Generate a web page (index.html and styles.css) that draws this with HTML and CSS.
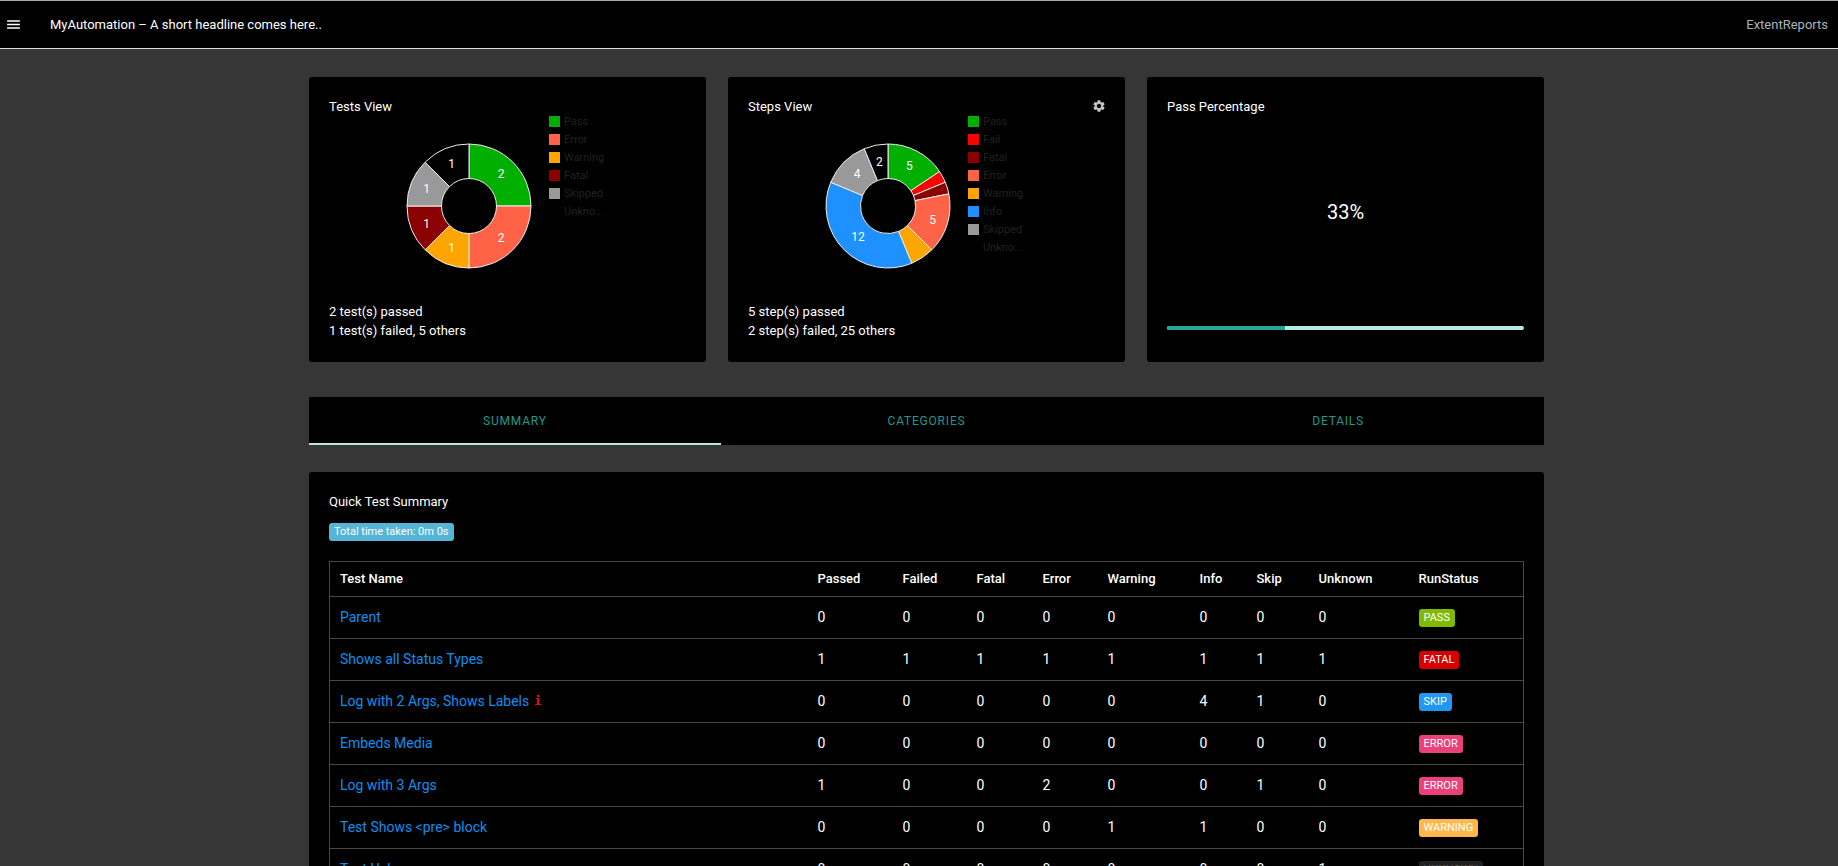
FILE: index.html
```html
<!DOCTYPE html>
<html>
<head>
    <meta charset="UTF-8">
    <title>MyAutomation</title>
    <link rel="stylesheet" href="styles.css">
</head>
<body>
    <nav class="topbar">
        <svg class="menu-icon" viewBox="0 0 24 24"><path d="M3 18h18v-2H3v2zm0-5h18v-2H3v2zm0-7v2h18V6H3z"/></svg>
        <span class="headline">MyAutomation – A short headline comes here..</span>
        <span class="brand">ExtentReports</span>
    </nav>

    <main class="container">
        <section class="charts">
            <div class="card">
                <div class="card-head"><span>Tests View</span></div>
                <div class="chart">
                    <svg class="donut" viewBox="-63 -63 126 126">
                        <path class="seg pass" d="M0 -62A62 62 0 0 1 62 0L27.5 0A27.5 27.5 0 0 0 0 -27.5Z"/>
                        <path class="seg error" d="M62 0A62 62 0 0 1 0 62L0 27.5A27.5 27.5 0 0 0 27.5 0Z"/>
                        <path class="seg warning" d="M0 62A62 62 0 0 1 -43.84 43.84L-19.45 19.45A27.5 27.5 0 0 0 0 27.5Z"/>
                        <path class="seg fatal" d="M-43.84 43.84A62 62 0 0 1 -62 0L-27.5 0A27.5 27.5 0 0 0 -19.45 19.45Z"/>
                        <path class="seg skipped" d="M-62 0A62 62 0 0 1 -43.84 -43.84L-19.45 -19.45A27.5 27.5 0 0 0 -27.5 0Z"/>
                        <path class="seg unknown" d="M-43.84 -43.84A62 62 0 0 1 0 -62L0 -27.5A27.5 27.5 0 0 0 -19.45 -19.45Z"/>
                        <text x="32" y="-32">2</text>
                        <text x="32" y="32">2</text>
                        <text x="-17.5" y="42">1</text>
                        <text x="-42.5" y="17.5">1</text>
                        <text x="-42.5" y="-17.5">1</text>
                        <text x="-17.5" y="-42">1</text>
                    </svg>
                    <ul class="legend">
                        <li><i class="box pass"></i>Pass</li>
                        <li><i class="box error"></i>Error</li>
                        <li><i class="box warning"></i>Warning</li>
                        <li><i class="box fatal"></i>Fatal</li>
                        <li><i class="box skipped"></i>Skipped</li>
                        <li><i class="box"></i>Unkno...</li>
                    </ul>
                </div>
                <div class="card-foot">
                    <div>2 test(s) passed</div>
                    <div>1 test(s) failed, 5 others</div>
                </div>
            </div>

            <div class="card">
                <div class="card-head">
                    <span>Steps View</span>
                    <svg class="gear" viewBox="2 2 20 20"><path d="M19.14,12.94c0.04-0.3,0.06-0.61,0.06-0.94c0-0.32-0.02-0.64-0.07-0.94l2.03-1.58c0.18-0.14,0.23-0.41,0.12-0.61l-1.92-3.32c-0.12-0.22-0.37-0.29-0.59-0.22l-2.39,0.96c-0.5-0.38-1.03-0.7-1.62-0.94L14.4,2.81c-0.04-0.24-0.24-0.41-0.48-0.41h-3.84c-0.24,0-0.43,0.17-0.47,0.41L9.25,5.35C8.66,5.59,8.12,5.92,7.63,6.29L5.24,5.33c-0.22-0.08-0.47,0-0.59,0.22L2.74,8.87C2.62,9.08,2.66,9.34,2.86,9.48l2.03,1.58C4.84,11.36,4.8,11.69,4.8,12s0.02,0.64,0.07,0.94l-2.03,1.58c-0.18,0.14-0.23,0.41-0.12,0.61l1.92,3.32c0.12,0.22,0.37,0.29,0.59,0.22l2.39-0.96c0.5,0.38,1.03,0.7,1.62,0.94l0.36,2.54c0.05,0.24,0.24,0.41,0.48,0.41h3.84c0.24,0,0.44-0.17,0.47-0.41l0.36-2.54c0.59-0.24,1.13-0.56,1.62-0.94l2.39,0.96c0.22,0.08,0.47,0,0.59-0.22l1.92-3.32c0.12-0.22,0.07-0.47-0.12-0.61L19.14,12.94z M12,15.6c-1.98,0-3.6-1.62-3.6-3.6s1.62-3.6,3.6-3.6s3.6,1.62,3.6,3.6S13.98,15.6,12,15.6z"/></svg>
                </div>
                <div class="chart">
                    <svg class="donut" viewBox="-63 -63 126 126">
                        <path class="seg pass" d="M0 -62A62 62 0 0 1 51.55 -34.45L22.87 -15.28A27.5 27.5 0 0 0 0 -27.5Z"/>
                        <path class="seg fail" d="M51.55 -34.45A62 62 0 0 1 57.28 -23.73L25.41 -10.52A27.5 27.5 0 0 0 22.87 -15.28Z"/>
                        <path class="seg fatal" d="M57.28 -23.73A62 62 0 0 1 60.81 -12.1L26.97 -5.37A27.5 27.5 0 0 0 25.41 -10.52Z"/>
                        <path class="seg error" d="M60.81 -12.1A62 62 0 0 1 43.84 43.84L19.45 19.45A27.5 27.5 0 0 0 26.97 -5.37Z"/>
                        <path class="seg warning" d="M43.84 43.84A62 62 0 0 1 23.73 57.28L10.52 25.41A27.5 27.5 0 0 0 19.45 19.45Z"/>
                        <path class="seg info" d="M23.73 57.28A62 62 0 0 1 -57.28 -23.73L-25.41 -10.52A27.5 27.5 0 0 0 10.52 25.41Z"/>
                        <path class="seg skipped" d="M-57.28 -23.73A62 62 0 0 1 -23.73 -57.28L-10.52 -25.41A27.5 27.5 0 0 0 -25.41 -10.52Z"/>
                        <path class="seg unknown" d="M-23.73 -57.28A62 62 0 0 1 0 -62L0 -27.5A27.5 27.5 0 0 0 -10.52 -25.41Z"/>
                        <text x="21.3" y="-39.7">5</text>
                        <text x="44.7" y="13.7">5</text>
                        <text x="-30" y="31">12</text>
                        <text x="-31" y="-31.6">4</text>
                        <text x="-8.7" y="-43.9">2</text>
                    </svg>
                    <ul class="legend">
                        <li><i class="box pass"></i>Pass</li>
                        <li><i class="box fail"></i>Fail</li>
                        <li><i class="box fatal"></i>Fatal</li>
                        <li><i class="box error"></i>Error</li>
                        <li><i class="box warning"></i>Warning</li>
                        <li><i class="box info"></i>Info</li>
                        <li><i class="box skipped"></i>Skipped</li>
                        <li><i class="box"></i>Unkno...</li>
                    </ul>
                </div>
                <div class="card-foot">
                    <div>5 step(s) passed</div>
                    <div>2 step(s) failed, 25 others</div>
                </div>
            </div>

            <div class="card">
                <div class="card-head"><span>Pass Percentage</span></div>
                <div class="percent">33%</div>
                <div class="progress"><div class="progress-fill"></div></div>
            </div>
        </section>

        <ul class="tabs">
            <li class="tab active">Summary</li>
            <li class="tab">Categories</li>
            <li class="tab">Details</li>
        </ul>

        <section class="card summary">
            <div class="summary-title">Quick Test Summary</div>
            <span class="time-badge">Total time taken: 0m 0s</span>
            <table class="results">
                <colgroup>
                    <col class="c-name"><col class="c-passed"><col class="c-failed"><col class="c-fatal"><col class="c-error">
                    <col class="c-warning"><col class="c-info"><col class="c-skip"><col class="c-unknown"><col>
                </colgroup>
                <thead>
                    <tr><th>Test Name</th><th>Passed</th><th>Failed</th><th>Fatal</th><th>Error</th><th>Warning</th><th>Info</th><th>Skip</th><th>Unknown</th><th>RunStatus</th></tr>
                </thead>
                <tbody>
                    <tr><td><a href="#">Parent</a></td><td>0</td><td>0</td><td>0</td><td>0</td><td>0</td><td>0</td><td>0</td><td>0</td><td><span class="status st-pass">PASS</span></td></tr>
                    <tr><td><a href="#">Shows all Status Types</a></td><td>1</td><td>1</td><td>1</td><td>1</td><td>1</td><td>1</td><td>1</td><td>1</td><td><span class="status st-fatal">FATAL</span></td></tr>
                    <tr><td><a href="#">Log with 2 Args, Shows Labels</a> <svg class="flag" viewBox="0 0 6 10"><path d="M2 0h2v2H2zM1 3h3v6h2v1H0V9h2V4H1z"/></svg></td><td>0</td><td>0</td><td>0</td><td>0</td><td>0</td><td>4</td><td>1</td><td>0</td><td><span class="status st-skip">SKIP</span></td></tr>
                    <tr><td><a href="#">Embeds Media</a></td><td>0</td><td>0</td><td>0</td><td>0</td><td>0</td><td>0</td><td>0</td><td>0</td><td><span class="status st-error">ERROR</span></td></tr>
                    <tr><td><a href="#">Log with 3 Args</a></td><td>1</td><td>0</td><td>0</td><td>2</td><td>0</td><td>0</td><td>1</td><td>0</td><td><span class="status st-error">ERROR</span></td></tr>
                    <tr><td><a href="#">Test Shows &lt;pre&gt; block</a></td><td>0</td><td>0</td><td>0</td><td>0</td><td>1</td><td>1</td><td>0</td><td>0</td><td><span class="status st-warning">WARNING</span></td></tr>
                    <tr><td><a href="#">Test Unknown</a></td><td>0</td><td>0</td><td>0</td><td>0</td><td>0</td><td>0</td><td>0</td><td>1</td><td><span class="status st-unknown">UNKNOWN</span></td></tr>
                </tbody>
            </table>
        </section>
    </main>
</body>
</html>
```

FILE: styles.css
```css
html, body {
    height: 100%;
    overflow: hidden;
}

body {
    margin: 0;
    background-color: #363636;
    color: #fff;
    font-family: Roboto, 'Liberation Sans', sans-serif;
    font-size: 13px;
}

ul {
    list-style: none;
    margin: 0;
    padding: 0;
}

a {
    color: #0f8fee;
    text-decoration: none;
}

/* top bar */
.topbar {
    display: flex;
    align-items: center;
    box-sizing: border-box;
    height: 49px;
    padding: 0 10px 0 4px;
    background-color: #000;
    border-top: 1px solid #aaa;
    border-bottom: 1px solid #ddd;
}

.menu-icon {
    width: 17px;
    height: 17px;
    margin-left: 1px;
    fill: #fff;
}

.headline {
    margin-left: 28px;
}

.brand {
    margin-left: auto;
    color: #a8b4bd;
}

/* page column */
.container {
    width: 1235px;
    margin: 28px 0 0 309px;
}

.charts {
    display: grid;
    grid-template-columns: repeat(3, 397px);
    column-gap: 22px;
}

.card {
    box-sizing: border-box;
    padding: 23px 20px 22px;
    background-color: #000;
    border-radius: 3px;
}

.card-head {
    display: flex;
    justify-content: space-between;
    align-items: center;
    height: 12px;
}

.gear {
    width: 12px;
    height: 12px;
    fill: #c4c4c4;
}

/* donut cards */
.chart {
    display: flex;
    align-items: flex-start;
    height: 190px;
}

.donut {
    flex: none;
    width: 126px;
    height: 126px;
    margin: 31px 0 0 77px;
}

.donut text {
    fill: #fff;
    font-size: 12px;
    text-anchor: middle;
    dominant-baseline: central;
}

.seg {
    stroke: #eee;
    stroke-width: 1;
}

.pass { fill: #00af00; background-color: #00af00; }
.fail { fill: #f00; background-color: #f00; }
.fatal { fill: #8b0000; background-color: #8b0000; }
.error { fill: #ff6347; background-color: #ff6347; }
.warning { fill: #ffa500; background-color: #ffa500; }
.info { fill: #1e90ff; background-color: #1e90ff; }
.skipped { fill: #999; background-color: #999; }
.unknown { fill: #000; }

.legend {
    margin-left: 17px;
    color: #222;
    font-size: 11px;
}

.legend li {
    display: flex;
    align-items: center;
    height: 18px;
}

.box {
    width: 11px;
    height: 11px;
    margin-right: 4px;
}

.card-foot {
    line-height: 19px;
}

/* pass percentage card */
.percent {
    box-sizing: border-box;
    height: 190px;
    padding-top: 88px;
    text-align: center;
    font-size: 20px;
}

.progress {
    height: 4px;
    margin-top: 24px;
    margin-bottom: 10px;
    background-color: #b2ebe5;
    border-radius: 2px;
    overflow: hidden;
}

.progress-fill {
    width: 33%;
    height: 100%;
    background-color: #26a69a;
}

/* tabs */
.tabs {
    display: grid;
    grid-template-columns: repeat(3, 1fr);
    margin-top: 35px;
    background-color: #000;
}

.tab {
    box-sizing: border-box;
    height: 48px;
    line-height: 48px;
    text-align: center;
    text-transform: uppercase;
    font-size: 12px;
    letter-spacing: .8px;
    color: #22988c;
    border-bottom: 2px solid #000;
}

.tab.active {
    border-bottom-color: #b9e6e2;
}

/* summary table */
.summary {
    margin-top: 27px;
    padding-top: 20px;
}

.summary-title {
    height: 20px;
    line-height: 20px;
}

.time-badge {
    display: block;
    width: fit-content;
    height: 18px;
    line-height: 18px;
    margin-top: 11px;
    padding: 0 5px;
    background-color: #56b5d6;
    border-radius: 3px;
    font-size: 11px;
}

.results {
    width: 100%;
    margin-top: 20px;
    border-collapse: collapse;
    table-layout: fixed;
    font-size: 14px;
}

.results th,
.results td {
    padding: 0 11px 1px;
    border-top: 1px solid #484848;
    border-bottom: 1px solid #484848;
    text-align: left;
}

.results th {
    height: 33px;
    font-size: 13px;
    font-weight: 500;
}

.results td {
    height: 40px;
}

.results tr > :first-child {
    padding-left: 10px;
    border-left: 1px solid #484848;
}

.results tr > :last-child {
    border-right: 1px solid #484848;
}

.c-name { width: 477px; }
.c-passed { width: 85px; }
.c-failed { width: 74px; }
.c-fatal { width: 66px; }
.c-error { width: 65px; }
.c-warning { width: 92px; }
.c-info { width: 57px; }
.c-skip { width: 62px; }
.c-unknown { width: 100px; }

.flag {
    width: 6px;
    height: 10px;
    margin-left: 2px;
    fill: #f00;
    vertical-align: 1px;
}

.status {
    display: inline-block;
    height: 18px;
    line-height: 18px;
    margin-top: 2px;
    padding: 0 5px;
    border-radius: 3px;
    font-size: 11px;
    color: #fff;
}

.st-pass { background-color: #7fba00; }
.st-fatal { background-color: #d60000; }
.st-skip { background-color: #2196f3; }
.st-error { background-color: #ec407a; }
.st-warning { background-color: #ffb74d; }
.st-unknown { background-color: #222; color: #555; }
```
